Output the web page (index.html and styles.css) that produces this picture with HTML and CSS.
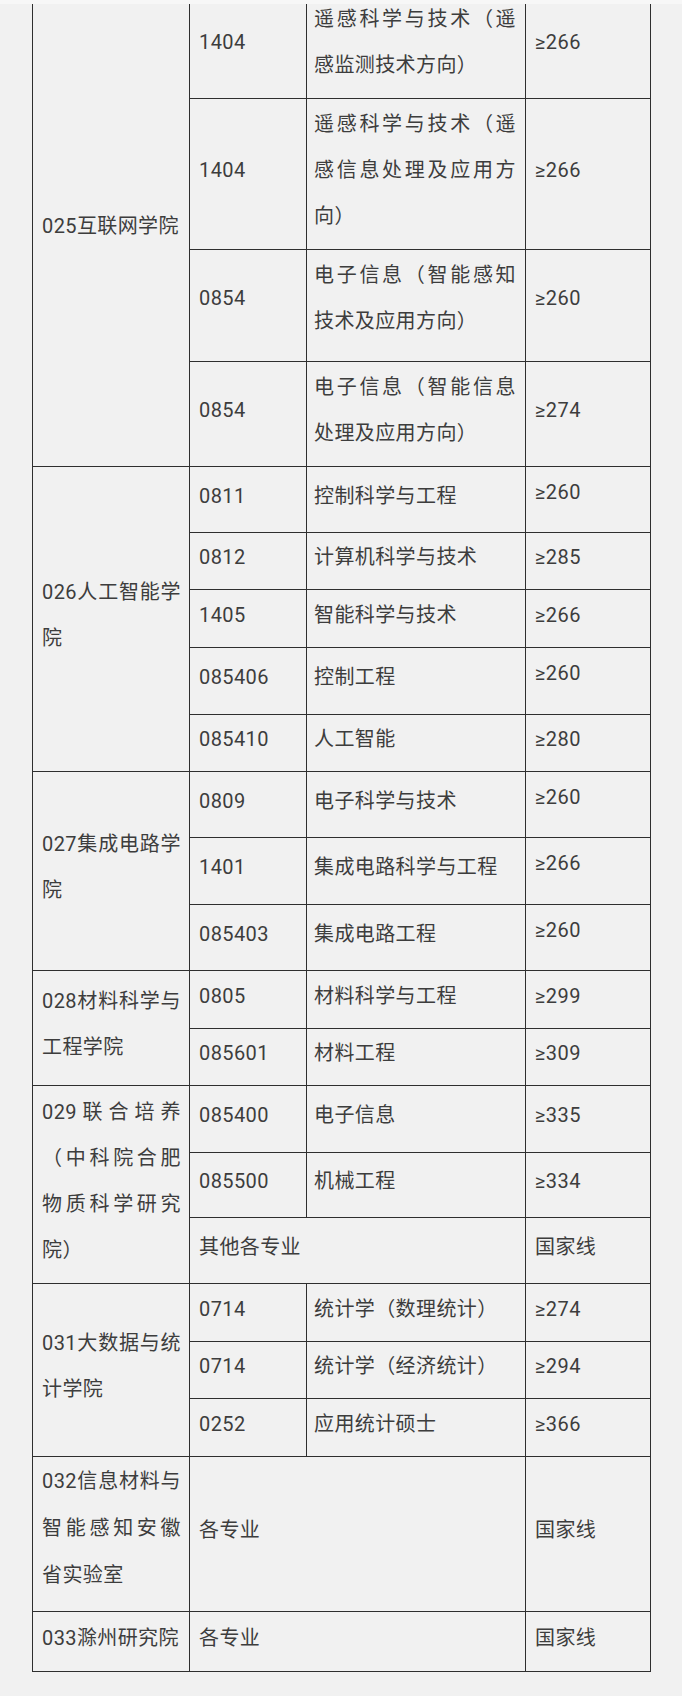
FILE: index.html
```html
<!DOCTYPE html>
<html lang="zh-CN">
<head>
<meta charset="utf-8">
<title>复试分数线</title>
<link rel="stylesheet" href="styles.css">
</head>
<body>
<div class="topband"></div>
<table class="grid">
  <colgroup><col class="c1"><col class="c2"><col class="c3"><col class="c4"></colgroup>
  <tr class="h105"><td rowspan="4" class="school">025互联网学院</td><td>1404</td><td class="major">遥感科学与技术（遥感监测技术方向）</td><td>≥266</td></tr>
  <tr class="h151"><td>1404</td><td class="major">遥感科学与技术（遥感信息处理及应用方向）</td><td>≥266</td></tr>
  <tr class="h112"><td>0854</td><td class="major">电子信息（智能感知技术及应用方向）</td><td>≥260</td></tr>
  <tr class="h105"><td>0854</td><td class="major">电子信息（智能信息处理及应用方向）</td><td>≥274</td></tr>
  <tr class="h66"><td rowspan="5" class="school">026人工智能学院</td><td>0811</td><td class="major">控制科学与工程</td><td class="vt">≥260</td></tr>
  <tr class="h57"><td>0812</td><td class="major">计算机科学与技术</td><td>≥285</td></tr>
  <tr class="h58"><td>1405</td><td class="major">智能科学与技术</td><td>≥266</td></tr>
  <tr class="h67"><td>085406</td><td class="major">控制工程</td><td class="vt">≥260</td></tr>
  <tr class="h57"><td>085410</td><td class="major">人工智能</td><td>≥280</td></tr>
  <tr class="h66"><td rowspan="3" class="school">027集成电路学院</td><td>0809</td><td class="major">电子科学与技术</td><td class="vt">≥260</td></tr>
  <tr class="h67"><td>1401</td><td class="major">集成电路科学与工程</td><td class="vt">≥266</td></tr>
  <tr class="h66"><td>085403</td><td class="major">集成电路工程</td><td class="vt">≥260</td></tr>
  <tr class="h58"><td rowspan="2" class="school">028材料科学与工程学院</td><td>0805</td><td class="major">材料科学与工程</td><td>≥299</td></tr>
  <tr class="h57"><td>085601</td><td class="major">材料工程</td><td>≥309</td></tr>
  <tr class="h67"><td rowspan="3" class="school">029联合培养（中科院合肥物质科学研究院）</td><td>085400</td><td class="major">电子信息</td><td>≥335</td></tr>
  <tr class="h65"><td>085500</td><td class="major">机械工程</td><td>≥334</td></tr>
  <tr class="h66"><td colspan="2">其他各专业</td><td>国家线</td></tr>
  <tr class="h58"><td rowspan="3" class="school">031大数据与统计学院</td><td>0714</td><td class="major">统计学（数理统计）</td><td>≥274</td></tr>
  <tr class="h57"><td>0714</td><td class="major">统计学（经济统计）</td><td>≥294</td></tr>
  <tr class="h58"><td>0252</td><td class="major">应用统计硕士</td><td>≥366</td></tr>
  <tr class="h155"><td class="school s032">032信息材料与智能感知安徽省实验室</td><td colspan="2">各专业</td><td>国家线</td></tr>
  <tr class="h60"><td class="school">033滁州研究院</td><td colspan="2">各专业</td><td>国家线</td></tr>
</table>
</body>
</html>
```

FILE: styles.css
```css
html, body {
  margin: 0;
  padding: 0;
  background: #f1f1f1;
}
body {
  font-family: Roboto, "Noto Sans CJK SC", sans-serif;
  font-size: 20px;
  letter-spacing: 0.4px;
  color: #3d3d3d;
  height: 1696px;
  overflow: hidden;
}
.topband {
  position: fixed;
  top: 0;
  left: 0;
  right: 0;
  height: 4px;
  background: #f7f7f7;
  z-index: 2;
}
.grid {
  border-collapse: collapse;
  table-layout: fixed;
  width: 618px;
  margin: -7px 0 0 32px;
}
.c1 { width: 157px; }
.c2 { width: 117px; }
.c3 { width: 219px; }
.c4 { width: 125px; }
.grid td {
  border: 1px solid #2f2f2f;
  padding: 0 8px 8px 9px;
  line-height: 46px;
  vertical-align: middle;
  text-align: justify;
  word-break: normal;
}
.grid td.major {
  padding-left: 7px;
  padding-right: 9px;
}
.grid td.vt {
  vertical-align: top;
  padding-top: 2px;
}
.grid tr.h112 td { padding-bottom: 15px; }
.grid td.s032 { line-height: 47px; padding-bottom: 11px; }
.h57 { height: 57px; }
.h58 { height: 58px; }
.h60 { height: 60px; }
.h65 { height: 65px; }
.h66 { height: 66px; }
.h67 { height: 67px; }
.h105 { height: 105px; }
.h112 { height: 112px; }
.h151 { height: 151px; }
.h155 { height: 155px; }
```
